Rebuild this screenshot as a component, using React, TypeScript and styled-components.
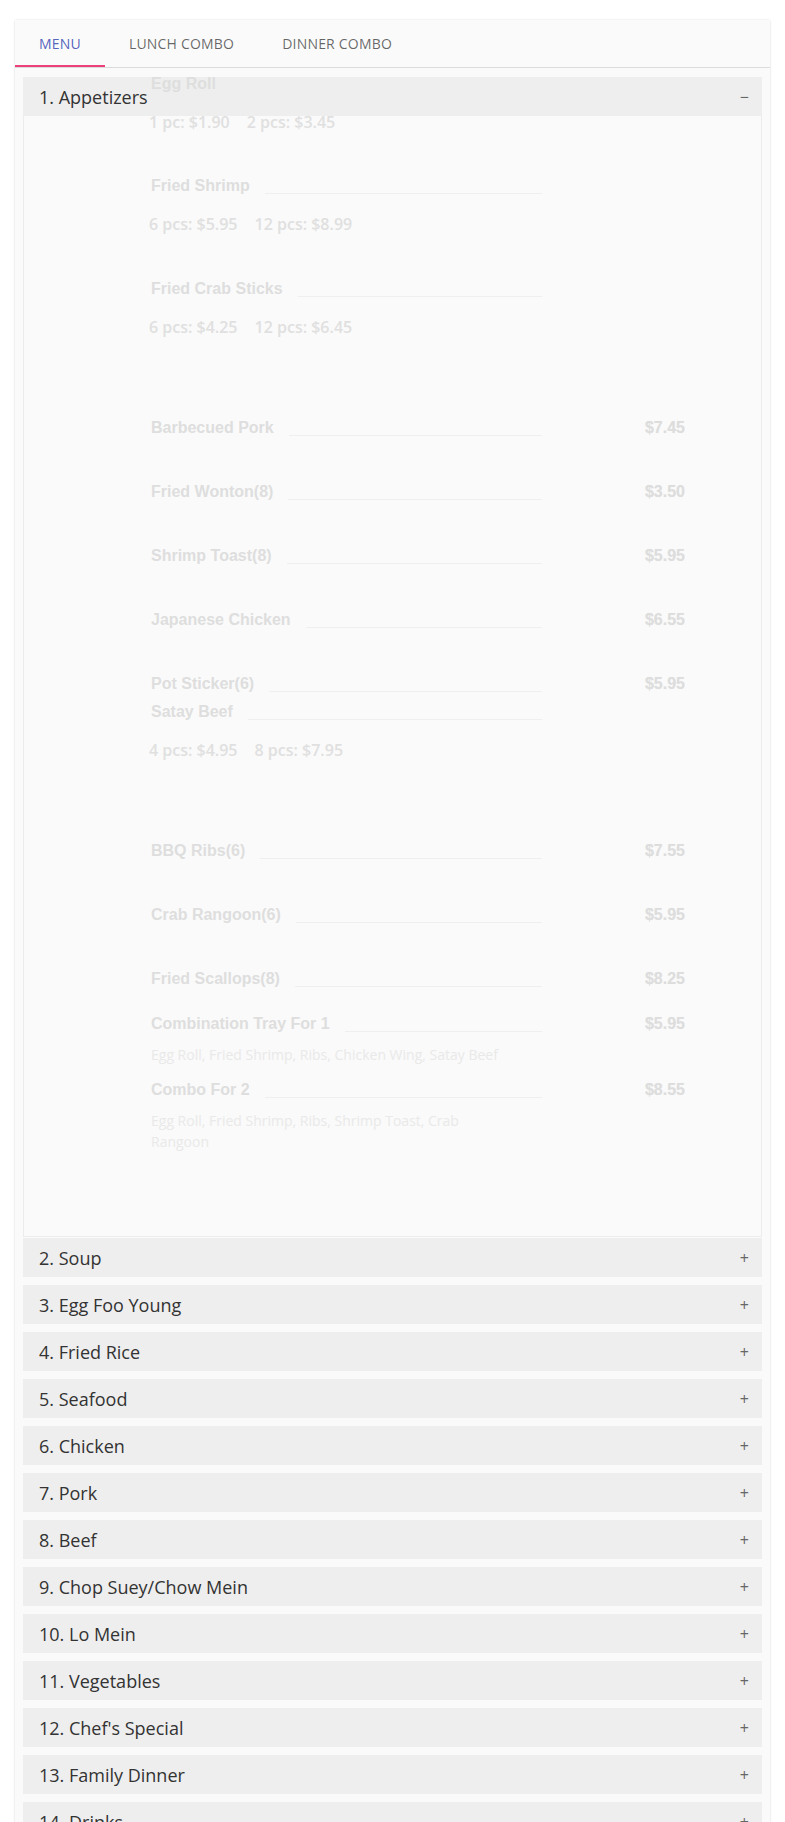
import React from 'react';
import styled, { createGlobalStyle } from 'styled-components';

const GlobalStyle = createGlobalStyle`
    body {
        margin: 0;
        background: #ffffff;
        font-family: "Open Sans", Roboto, sans-serif;
    }
`;

const Page = styled.div`
    padding: 20px 15px 0 15px;
`;

const Card = styled.div`
    background: #fafafa;
    box-shadow: 0 0 2px rgba(0, 0, 0, 0.12), 0 1px 2px rgba(0, 0, 0, 0.06);
    padding-bottom: 40px;
`;

const TabBar = styled.div`
    display: flex;
    height: 47px;
    border-bottom: 1px solid rgba(0, 0, 0, 0.12);
`;

const Tab = styled.div<{ $active?: boolean }>`
    position: relative;
    display: flex;
    align-items: center;
    padding: 0 24px;
    font-size: 14px;
    letter-spacing: 0.2px;
    text-transform: uppercase;
    color: ${({ $active }) => ($active ? 'rgba(63, 81, 181, 0.9)' : 'rgba(0, 0, 0, 0.6)')};

    &::after {
        content: '';
        display: ${({ $active }) => ($active ? 'block' : 'none')};
        position: absolute;
        left: 0;
        right: 0;
        bottom: 0;
        height: 2px;
        background: #ec407a;
    }
`;

const Accordion = styled.div`
    padding: 9px 8px 0 8px;
`;

const Panel = styled.div<{ $open?: boolean }>`
    margin-bottom: ${({ $open }) => ($open ? '1px' : '8px')};
`;

const Header = styled.div`
    display: flex;
    align-items: center;
    justify-content: space-between;
    height: 39px;
    padding: 0 13px 0 16px;
    background: #eeeeee;
    color: #333333;
    font-size: 18px;
`;

const Toggle = styled.span`
    font-size: 16px;
    color: #666666;
`;

const Body = styled.div`
    display: flow-root;
    background: #fafafa;
    border: 1px solid #ececec;
    border-top: none;
    padding: 0 0 84px 127px;
`;

const ItemList = styled.div`
    width: 534px;
    margin-top: -42px;
`;

const Item = styled.div<{ $mt: number }>`
    margin-top: ${({ $mt }) => $mt}px;
`;

const NameRow = styled.div`
    display: flex;
    align-items: flex-end;
`;

const NameCell = styled.div`
    display: flex;
    align-items: flex-end;
    width: 391px;
`;

const Name = styled.span`
    font-family: "Liberation Sans", Arial, sans-serif;
    font-weight: 700;
    font-size: 16px;
    line-height: 19px;
    color: #dedede;
    white-space: nowrap;
`;

const Leader = styled.span`
    flex: 1;
    margin: 0 0 1px 15px;
    border-bottom: 1px solid #efefef;
`;

const Price = styled.span`
    flex: 1;
    text-align: right;
    font-family: "Liberation Sans", Arial, sans-serif;
    font-weight: 700;
    font-size: 16px;
    line-height: 19px;
    color: #dddddd;
    text-shadow: 0 0 1px rgba(0, 0, 0, 0.06);
`;

const Sizes = styled.div`
    display: flex;
    gap: 17px;
    margin: 18px 0 0 -2px;
    font-size: 16px;
    font-weight: 600;
    line-height: 22px;
    color: #e0e0e0;
`;

const Desc = styled.div`
    max-width: 366px;
    margin-top: 11px;
    font-size: 14px;
    line-height: 21px;
    color: #e9e9e9;
`;

type MenuItem = {
    name: string;
    mt: number;
    price?: string;
    sizes?: string[];
    desc?: string;
};

const appetizers: MenuItem[] = [
    { name: 'Egg Roll', mt: 0, sizes: ['1 pc: $1.90', '2 pcs: $3.45'] },
    { name: 'Fried Shrimp', mt: 43, sizes: ['6 pcs: $5.95', '12 pcs: $8.99'] },
    { name: 'Fried Crab Sticks', mt: 44, sizes: ['6 pcs: $4.25', '12 pcs: $6.45'] },
    { name: 'Barbecued Pork', mt: 80, price: '$7.45' },
    { name: 'Fried Wonton(8)', mt: 45, price: '$3.50' },
    { name: 'Shrimp Toast(8)', mt: 45, price: '$5.95' },
    { name: 'Japanese Chicken', mt: 45, price: '$6.55' },
    { name: 'Pot Sticker(6)', mt: 45, price: '$5.95' },
    { name: 'Satay Beef', mt: 9, sizes: ['4 pcs: $4.95', '8 pcs: $7.95'] },
    { name: 'BBQ Ribs(6)', mt: 80, price: '$7.55' },
    { name: 'Crab Rangoon(6)', mt: 45, price: '$5.95' },
    { name: 'Fried Scallops(8)', mt: 45, price: '$8.25' },
    {
        name: 'Combination Tray For 1',
        mt: 26,
        price: '$5.95',
        desc: 'Egg Roll, Fried Shrimp, Ribs, Chicken Wing, Satay Beef',
    },
    {
        name: 'Combo For 2',
        mt: 15,
        price: '$8.55',
        desc: 'Egg Roll, Fried Shrimp, Ribs, Shrimp Toast, Crab Rangoon',
    },
];

const categories = [
    '2. Soup',
    '3. Egg Foo Young',
    '4. Fried Rice',
    '5. Seafood',
    '6. Chicken',
    '7. Pork',
    '8. Beef',
    '9. Chop Suey/Chow Mein',
    '10. Lo Mein',
    '11. Vegetables',
    "12. Chef's Special",
    '13. Family Dinner',
    '14. Drinks',
];

const App: React.FC = () => {
    return (
        <Page>
            <GlobalStyle />
            <Card>
                <TabBar>
                    <Tab $active>Menu</Tab>
                    <Tab>Lunch Combo</Tab>
                    <Tab>Dinner Combo</Tab>
                </TabBar>
                <Accordion>
                    <Panel $open>
                        <Header>
                            <span>1. Appetizers</span>
                            <Toggle>−</Toggle>
                        </Header>
                        <Body>
                            <ItemList>
                                {appetizers.map((item) => (
                                    <Item key={item.name} $mt={item.mt}>
                                        <NameRow>
                                            <NameCell>
                                                <Name>{item.name}</Name>
                                                <Leader />
                                            </NameCell>
                                            {item.price && <Price>{item.price}</Price>}
                                        </NameRow>
                                        {item.sizes && (
                                            <Sizes>
                                                {item.sizes.map((s) => (
                                                    <span key={s}>{s}</span>
                                                ))}
                                            </Sizes>
                                        )}
                                        {item.desc && <Desc>{item.desc}</Desc>}
                                    </Item>
                                ))}
                            </ItemList>
                        </Body>
                    </Panel>
                    {categories.map((c) => (
                        <Panel key={c}>
                            <Header>
                                <span>{c}</span>
                                <Toggle>+</Toggle>
                            </Header>
                        </Panel>
                    ))}
                </Accordion>
            </Card>
        </Page>
    );
};

export default App;
